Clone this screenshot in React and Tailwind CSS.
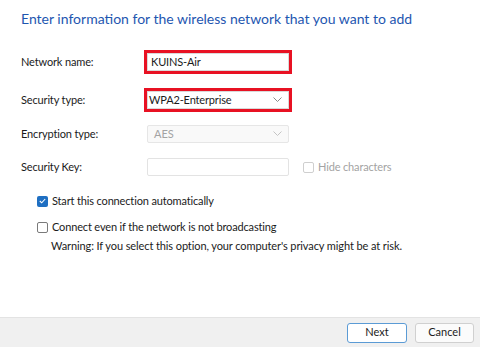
import React from 'react';

const Chevron = ({ color = '#6b6b6b' }) => (
  <svg width="9" height="6" viewBox="0 0 9 6" fill="none">
    <polyline points="0.5,0.5 4.5,4.5 8.5,0.5" stroke={color} strokeWidth="1" />
  </svg>
);

function Row({ label, top, red, children }) {
  return (
    <div className="flex items-center h-[24px]" style={{ marginTop: top }}>
      <div className="w-[123px] text-[11px] tracking-[-0.15px] text-[#1b1b1b]">{label}</div>
      <div className={`border-[3px] ${red ? 'border-[#e81123]' : 'border-transparent'} w-[148px] h-[24px] flex`}>
        {children}
      </div>
    </div>
  );
}

function App() {
  return (
    <div
      className="w-[480px] h-[347px] bg-white flex flex-col overflow-hidden"
      style={{ fontFamily: 'Lato, "Open Sans", sans-serif' }}
    >
      <div className="flex-1 pl-[21px]">
        <h1 className="pt-[9px] text-[14px] leading-[20px] text-[#1e56b0]">
          Enter information for the wireless network that you want to add
        </h1>

        <Row label="Network name:" top={21} red>
          <div className="flex-1 bg-white border border-[#d9d9d9] px-[3px] flex items-center text-[11px] tracking-[-0.15px] text-[#1b1b1b]">
            KUINS-Air
          </div>
        </Row>

        <Row label="Security type:" top={14} red>
          <div className="flex-1 bg-white border border-[#d9d9d9] pl-[1px] pr-[6px] flex items-center justify-between text-[11px] tracking-[-0.15px] text-[#1b1b1b]">
            <span>WPA2-Enterprise</span>
            <Chevron color="#8a8a8a" />
          </div>
        </Row>

        <Row label="Encryption type:" top={10}>
          <div className="flex-1 bg-[#f9f9f9] border border-[#e6e6e6] rounded-[2px] px-[6px] flex items-center justify-between text-[11px] text-[#a3a3a3]">
            <span>AES</span>
            <Chevron color="#c4c4c4" />
          </div>
        </Row>

        <div className="flex items-center">
          <Row label="Security Key:" top={9}>
            <div className="flex-1 bg-white border border-[#e3e3e3] rounded-[2px]" />
          </Row>
          <div className="flex items-center gap-[4px] ml-[11px] mt-[9px] text-[11px] tracking-[-0.15px] text-[#a3a3a3]">
            <span className="w-[11px] h-[11px] border border-[#cfcfcf] rounded-[2px] bg-white" />
            <span>Hide characters</span>
          </div>
        </div>

        <div className="pl-[16px] mt-[14px] flex flex-col text-[11px] tracking-[-0.15px] text-[#1b1b1b]">
          <div className="flex items-center gap-[4px] h-[16px]">
            <span className="w-[11px] h-[11px] rounded-[2px] bg-[#1f6fc2] flex items-center justify-center">
              <svg width="7" height="6" viewBox="0 0 7 6" fill="none">
                <polyline points="0.8,3 2.7,4.8 6.2,1" stroke="white" strokeWidth="1.1" />
              </svg>
            </span>
            <span>Start this connection automatically</span>
          </div>
          <div className="flex items-center gap-[4px] h-[16px] mt-[10px]">
            <span className="w-[11px] h-[11px] rounded-[2px] border border-[#7a7a7a] bg-white" />
            <span>Connect even if the network is not broadcasting</span>
          </div>
          <div className="pl-[14px] h-[16px] mt-[3px] flex items-center text-[11px] tracking-[-0.1px]">
            Warning: If you select this option, your computer's privacy might be at risk.
          </div>
        </div>
      </div>

      <div className="h-[30px] bg-[#f0f0f0] border-t border-[#e3e3e3] flex items-center justify-end gap-[8px] pr-[6px]">
        <button className="w-[60px] h-[20px] bg-white border border-[#5b9bd5] rounded-[3px] text-[11px] text-[#1b1b1b]">
          Next
        </button>
        <button className="w-[59px] h-[20px] bg-[#fbfbfb] border border-[#d0d0d0] rounded-[3px] text-[11px] text-[#1b1b1b]">
          Cancel
        </button>
      </div>
    </div>
  );
}

export default App;
